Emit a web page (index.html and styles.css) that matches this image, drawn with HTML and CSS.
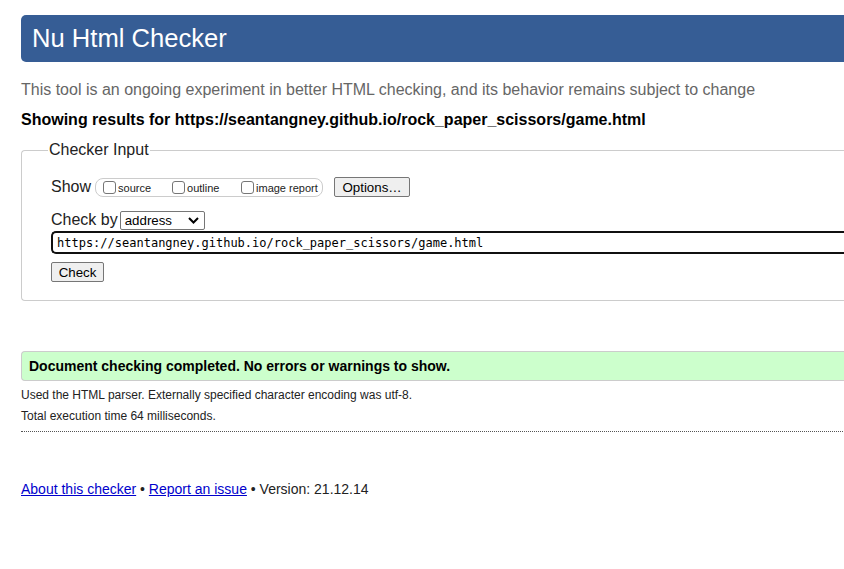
FILE: index.html
```html
<!DOCTYPE html>
<html>
<head>
<meta charset="utf-8">
<title>Nu Html Checker</title>
<link rel="stylesheet" href="styles.css">
</head>
<body>
<div class="page">
  <h1 class="banner">Nu Html Checker</h1>
  <p class="tagline">This tool is an ongoing experiment in better HTML checking, and its behavior remains subject to change</p>
  <p class="showing">Showing results for https://seantangney.github.io/rock_paper_scissors/game.html</p>
  <fieldset class="checker">
    <legend>Checker Input</legend>
    <div class="row show-row">
      <span class="lbl">Show</span>
      <span class="pill">
        <label class="opt"><span class="cb"></span>source</label>
        <label class="opt"><span class="cb"></span>outline</label>
        <label class="opt"><span class="cb"></span>image report</label>
      </span>
      <span class="btn options">Options…</span>
    </div>
    <div class="row by-row">
      <span class="lbl">Check by</span>
      <span class="select">address<svg width="11" height="7" viewBox="0 0 11 7"><path d="M1 1 L5.5 5.5 L10 1" fill="none" stroke="#000" stroke-width="2"/></svg></span>
    </div>
    <div class="url">https://seantangney.github.io/rock_paper_scissors/game.html</div>
    <span class="btn check">Check</span>
  </fieldset>
  <div class="success">Document checking completed. No errors or warnings to show.</div>
  <p class="details first">Used the HTML parser. Externally specified character encoding was utf-8.</p>
  <p class="details">Total execution time 64 milliseconds.</p>
  <div class="dots"></div>
  <p class="footer"><a href="#">About this checker</a> • <a href="#">Report an issue</a> • Version: 21.12.14</p>
</div>
</body>
</html>
```

FILE: styles.css
```css
html, body {
  margin: 0;
  padding: 0;
  background: #fff;
  overflow: hidden;
}
body {
  font-family: "Liberation Sans", Arial, sans-serif;
  color: #000;
  width: 844px;
  height: 569px;
}
.page {
  margin-left: 21px;
  width: 860px;
}
.banner {
  margin: 15px 0 0 0;
  height: 47px;
  background: #365d95;
  color: #fff;
  font-weight: normal;
  font-size: 25.6px;
  line-height: 47px;
  padding-left: 11px;
  border-radius: 5px 0 0 5px;
}
.tagline {
  margin: 18px 0 0 0;
  font-size: 16px;
  line-height: 20px;
  color: #666;
}
.showing {
  margin: 10px 0 0 0;
  font-size: 16px;
  line-height: 20px;
  font-weight: bold;
}
.checker {
  margin: 11px 0 0 0;
  border: 1px solid #ccc;
  border-right: none;
  border-radius: 4px 0 0 4px;
  padding: 18px 0 18px 29px;
}
.checker legend {
  font-size: 16px;
  padding: 0 1px;
  margin-left: -3px;
  color: #222;
}
.row {
  display: flex;
  align-items: center;
}
.lbl {
  font-size: 16px;
  line-height: 20px;
  color: #222;
}
.show-row {
  height: 20px;
}
.pill {
  display: inline-flex;
  align-items: center;
  margin-left: 4px;
  height: 19px;
  width: 228px;
  border: 1px solid #ccc;
  border-radius: 8px;
  padding: 0 0 0 7px;
  box-sizing: border-box;
}
.opt {
  display: inline-flex;
  align-items: center;
  font-size: 11px;
  line-height: 13px;
  padding-top: 2px;
  color: #222;
}
.opt:nth-child(1) { width: 69px; }
.opt:nth-child(2) { width: 69px; }
.cb {
  display: inline-block;
  width: 13px;
  height: 13px;
  border: 1px solid #767676;
  border-radius: 3px;
  box-sizing: border-box;
  margin: -2px 2px 0 0;
  background: #fff;
}
.btn {
  display: inline-flex;
  align-items: center;
  justify-content: center;
  background: #efefef;
  border: 1px solid #767676;
  border-radius: 2px;
  font-size: 13.3px;
  color: #000;
  box-sizing: border-box;
  height: 20px;
}
.options {
  margin-left: 11px;
  width: 76px;
}
.by-row {
  margin-top: 13px;
  height: 20px;
}
.select {
  display: inline-flex;
  align-items: center;
  justify-content: space-between;
  margin-left: 2px;
  width: 85px;
  height: 19px;
  box-sizing: border-box;
  border: 1px solid #767676;
  border-radius: 2px;
  padding: 0 5px 0 4px;
  font-size: 13.3px;
}
.url {
  margin-top: 1px;
  height: 23px;
  box-sizing: border-box;
  border: 2px solid #101010;
  border-right: none;
  border-radius: 5px 0 0 5px;
  font-family: "DejaVu Sans Mono", "Liberation Mono", monospace;
  font-size: 12px;
  line-height: 18px;
  padding: 1px 0 0 4px;
  color: #000;
}
.check {
  margin-top: 8px;
  width: 53px;
}
.success {
  margin-top: 50px;
  height: 30px;
  box-sizing: border-box;
  background: #ccffcc;
  border-top: 1px solid #ccc;
  border-bottom: 1px solid #ccc;
  border-left: 1px solid #ccc;
  border-radius: 4px 0 0 4px;
  font-weight: bold;
  font-size: 14px;
  line-height: 28px;
  padding-left: 7px;
}
.details {
  margin: 0;
  font-size: 12px;
  line-height: 21px;
  color: #222;
}
.details.first {
  margin-top: 4px;
}
.dots {
  margin-top: 4px;
  border-top: 1px dotted #555;
}
.footer {
  margin: 48px 0 0 0;
  font-size: 14px;
  line-height: 18px;
  color: #222;
}
.footer a {
  color: #00c;
}
```
